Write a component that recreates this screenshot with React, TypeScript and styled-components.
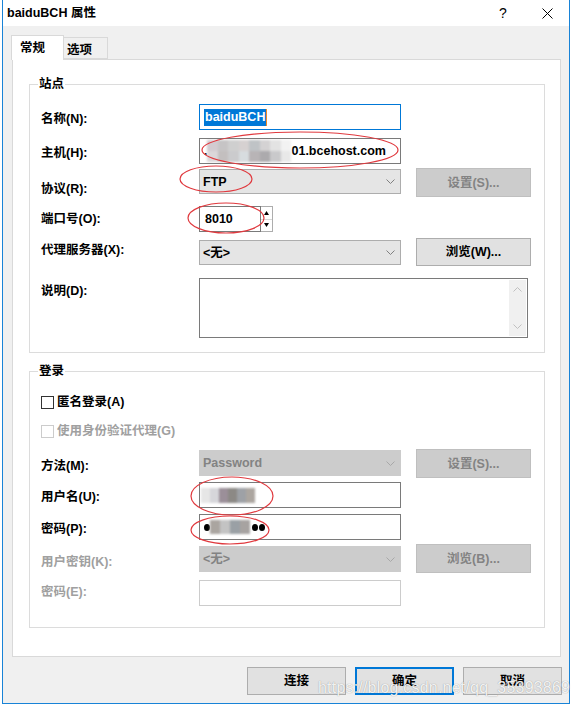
import React from "react";
import styled, { createGlobalStyle } from "styled-components";

const GlobalStyle = createGlobalStyle`
  html, body {
    margin: 0;
    padding: 0;
    background: #ffffff;
  }
  body {
    font-family: "Liberation Sans", "Noto Sans CJK SC", sans-serif;
    font-size: 12.5px;
    font-weight: bold;
    color: #000;
  }
  * {
    box-sizing: border-box;
  }
`;

const Page = styled.div`
  position: relative;
  width: 572px;
  height: 708px;
  padding-left: 2px;
  overflow: hidden;
`;

const Window = styled.div`
  width: 568px;
  height: 704px;
  border: 1px solid #1883d7;
  border-top: none;
  background: #f0f0f0;
  display: flex;
  flex-direction: column;
`;

const TitleBar = styled.div`
  height: 26px;
  background: #ffffff;
  display: flex;
  align-items: center;
  padding-left: 4px;
`;

const Title = styled.div`
  flex: 1;
  line-height: 16px;
`;

const CaptionButton = styled.div`
  width: 44px;
  height: 26px;
  display: flex;
  align-items: center;
  justify-content: center;
  font-weight: normal;
  font-size: 14px;
`;

const Body = styled.div`
  padding: 9px 7px 0 8px;
  flex: 1;
`;

const TabStrip = styled.div`
  display: flex;
  align-items: flex-end;
  height: 24px;
`;

const Tab = styled.div<{ $active?: boolean }>`
  position: relative;
  z-index: 1;
  height: ${(p) => (p.$active ? "25px" : "22px")};
  width: ${(p) => (p.$active ? "53px" : "44px")};
  margin-bottom: ${(p) => (p.$active ? "-1px" : "0")};
  padding-left: ${(p) => (p.$active ? "8px" : "3px")};
  padding-top: ${(p) => (p.$active ? "4px" : "4px")};
  line-height: 16px;
  background: ${(p) => (p.$active ? "#ffffff" : "#f0f0f0")};
  border: 1px solid #d9d9d9;
  border-bottom: ${(p) => (p.$active ? "none" : "1px solid #d9d9d9")};
  border-left: ${(p) => (p.$active ? "1px solid #d9d9d9" : "none")};
`;

const Panel = styled.div`
  margin-left: 1px;
  width: 549px;
  height: 598px;
  background: #ffffff;
  border: 1px solid #d9d9d9;
  padding: 24px 15px 0 16px;
`;

const Group = styled.div<{ $mt?: number; $pb: number }>`
  position: relative;
  border: 1px solid #dcdcdc;
  margin-top: ${(p) => p.$mt ?? 0}px;
  padding: 0 0 ${(p) => p.$pb}px 11px;
`;

const Legend = styled.span`
  position: absolute;
  top: -9px;
  left: 8px;
  background: #ffffff;
  padding: 0 1px;
  line-height: 16px;
`;

const Row = styled.div<{ $h: number; $mt: number }>`
  display: flex;
  align-items: flex-start;
  height: ${(p) => p.$h}px;
  margin-top: ${(p) => p.$mt}px;
`;

const Label = styled.div<{ $pt: number; $disabled?: boolean }>`
  width: 158px;
  flex-shrink: 0;
  padding-top: ${(p) => p.$pt}px;
  line-height: 16px;
  color: ${(p) => (p.$disabled ? "#a0a0a0" : "#000")};
`;

const Input = styled.div<{ $focus?: boolean; $disabled?: boolean; $w?: number }>`
  width: ${(p) => p.$w ?? 202}px;
  height: 26px;
  flex-shrink: 0;
  background: #ffffff;
  border: 1px solid
    ${(p) => (p.$focus ? "#0078d7" : p.$disabled ? "#cccccc" : "#7a7a7a")};
  display: flex;
  align-items: center;
  padding-left: 4px;
  line-height: 16px;
  white-space: nowrap;
  overflow: hidden;
`;

const Selected = styled.span`
  background: #0078d7;
  color: #ffffff;
  padding: 0 1px;
  line-height: 17px;
`;

const Caret = styled.span`
  display: inline-block;
  width: 1px;
  height: 17px;
  background: #f08a24;
`;

const Select = styled.div<{ $mt: number; $h: number; $disabled?: boolean }>`
  width: 202px;
  height: ${(p) => p.$h}px;
  margin-top: ${(p) => p.$mt}px;
  flex-shrink: 0;
  background: ${(p) => (p.$disabled ? "#cccccc" : "#e5e5e5")};
  border: 1px solid ${(p) => (p.$disabled ? "#cccccc" : "#adadad")};
  color: ${(p) => (p.$disabled ? "#838383" : "#000")};
  display: flex;
  align-items: center;
  justify-content: space-between;
  padding: 0 5px 0 3px;
  line-height: 16px;
`;

const SideButton = styled.div<{ $disabled?: boolean }>`
  width: 115px;
  height: 100%;
  margin-left: 15px;
  flex-shrink: 0;
  background: ${(p) => (p.$disabled ? "#cccccc" : "#e1e1e1")};
  border: 1px solid ${(p) => (p.$disabled ? "#bfbfbf" : "#adadad")};
  color: ${(p) => (p.$disabled ? "#838383" : "#000")};
  display: flex;
  align-items: center;
  justify-content: center;
  line-height: 16px;
`;

const Spinner = styled.div`
  width: 12px;
  height: 26px;
  border: 1px solid #adadad;
  border-left: none;
  display: flex;
  flex-direction: column;
`;

const SpinHalf = styled.div<{ $top?: boolean }>`
  flex: 1;
  display: flex;
  align-items: center;
  justify-content: center;
  border-bottom: ${(p) => (p.$top ? "1px solid #d8d8d8" : "none")};
`;

const DescBox = styled.div`
  width: 329px;
  height: 60px;
  border: 1px solid #7a7a7a;
  display: flex;
  justify-content: flex-end;
  padding: 1px;
`;

const ScrollBar = styled.div`
  width: 17px;
  height: 100%;
  background: #f0f0f0;
  display: flex;
  flex-direction: column;
  justify-content: space-between;
  align-items: center;
  padding: 7px 0 7px;
`;

const CheckBox = styled.span<{ $disabled?: boolean }>`
  display: inline-block;
  width: 13px;
  height: 13px;
  margin-top: 2px;
  background: #ffffff;
  border: 1px solid ${(p) => (p.$disabled ? "#cccccc" : "#333333")};
`;

const CheckText = styled.span<{ $disabled?: boolean }>`
  margin-left: 3px;
  line-height: 16px;
  color: ${(p) => (p.$disabled ? "#a0a0a0" : "#000")};
`;

const Mosaic = styled.span<{ $cols: number; $cw: number; $ch: number }>`
  display: inline-grid;
  grid-template-columns: repeat(${(p) => p.$cols}, ${(p) => p.$cw}px);
  grid-auto-rows: ${(p) => p.$ch}px;
  filter: blur(0.9px);
  flex-shrink: 0;
`;

const Cell = styled.span`
  display: block;
`;

const Dot = styled.span`
  display: inline-block;
  width: 6px;
  height: 7px;
  border-radius: 50%;
  background: #000;
  flex-shrink: 0;
`;

const Footer = styled.div`
  display: flex;
  justify-content: flex-end;
  gap: 9px;
  margin-top: 10px;
`;

const DialogButton = styled.div<{ $primary?: boolean }>`
  width: 99px;
  height: 28px;
  background: #e1e1e1;
  border: ${(p) => (p.$primary ? "2px solid #0078d7" : "1px solid #adadad")};
  display: flex;
  align-items: center;
  justify-content: center;
  line-height: 16px;
`;

const Overlay = styled.svg`
  position: absolute;
  top: 0;
  left: 0;
  pointer-events: none;
`;

const Watermark = styled.div`
  position: absolute;
  left: 318px;
  top: 679px;
  font-family: "Liberation Sans", sans-serif;
  font-weight: normal;
  font-size: 16px;
  letter-spacing: 0.2px;
  color: rgba(255, 255, 255, 0.9);
  text-shadow: 0 0 1px rgba(60, 60, 60, 0.55);
  pointer-events: none;
`;

const Chevron = ({ disabled }: { disabled?: boolean }) => (
  <svg width="9" height="5" viewBox="0 0 9 5">
    <polyline
      points="0.5,0.5 4.5,4.5 8.5,0.5"
      fill="none"
      stroke={disabled ? "#a8a8a8" : "#808080"}
      strokeWidth="1"
    />
  </svg>
);

const ScrollArrow = ({ up }: { up?: boolean }) => (
  <svg width="9" height="5" viewBox="0 0 9 5">
    <polyline
      points={up ? "0.5,4.5 4.5,0.5 8.5,4.5" : "0.5,0.5 4.5,4.5 8.5,0.5"}
      fill="none"
      stroke="#c0c0c0"
      strokeWidth="1"
    />
  </svg>
);

const SpinArrow = ({ up }: { up?: boolean }) => (
  <svg width="5" height="4" viewBox="0 0 5 4">
    <polygon points={up ? "2.5,0 5,4 0,4" : "0,0 5,0 2.5,4"} fill="#000" />
  </svg>
);

const renderMosaic = (rows: string[][], cw: number, ch: number) => (
  <Mosaic $cols={rows[0].length} $cw={cw} $ch={ch}>
    {rows.flat().map((c, i) => (
      <Cell key={i} style={{ background: c }} />
    ))}
  </Mosaic>
);

const hostMosaic = [
  ["#d2cbd0", "#c6c4c5", "#cfcfcf", "#d6d1d1", "#bfc3c6", "#d4d2d3", "#e3e3e3", "#f2f2f2"],
  ["#dbd7d9", "#c3bfbf", "#cbcbcd", "#d7dcdf", "#b8b4b6", "#acaaad", "#c9c9cb", "#e8e8e8"],
];
const userMosaic = [["#e6e6e6", "#d6d6da", "#9b8f99", "#8c8985", "#9ea1a6", "#aca6a0"]];
const passMosaic = [["#aaa5a0", "#c3c3c3", "#9aa0a5", "#a7a3a1"]];

export default function App() {
  return (
    <Page>
      <GlobalStyle />
      <Window>
        <TitleBar>
          <Title>baiduBCH 属性</Title>
          <CaptionButton>?</CaptionButton>
          <CaptionButton>
            <svg width="11" height="11" viewBox="0 0 11 11">
              <path d="M0.5 0.5 L10.5 10.5 M10.5 0.5 L0.5 10.5" stroke="#000" strokeWidth="1" />
            </svg>
          </CaptionButton>
        </TitleBar>
        <Body>
          <TabStrip>
            <Tab $active>常规</Tab>
            <Tab>选项</Tab>
          </TabStrip>
          <Panel>
            <Group $pb={14}>
              <Legend>站点</Legend>
              <Row $h={26} $mt={19}>
                <Label $pt={7}>名称(N):</Label>
                <Input $focus>
                  <Selected>baiduBCH</Selected>
                  <Caret />
                </Input>
              </Row>
              <Row $h={26} $mt={8}>
                <Label $pt={7}>主机(H):</Label>
                <Input>
                  <span>.</span>
                  {renderMosaic(hostMosaic, 10.5, 11)}
                  <span>01.bcehost.com</span>
                </Input>
              </Row>
              <Row $h={29} $mt={4}>
                <Label $pt={13}>协议(R):</Label>
                <Select $mt={1} $h={25}>
                  <span>FTP</span>
                  <Chevron />
                </Select>
                <SideButton $disabled>设置(S)...</SideButton>
              </Row>
              <Row $h={26} $mt={9}>
                <Label $pt={5}>端口号(O):</Label>
                <Input $w={62} style={{ paddingLeft: 5 }}>8010</Input>
                <Spinner>
                  <SpinHalf $top>
                    <SpinArrow up />
                  </SpinHalf>
                  <SpinHalf>
                    <SpinArrow />
                  </SpinHalf>
                </Spinner>
              </Row>
              <Row $h={28} $mt={6}>
                <Label $pt={4}>代理服务器(X):</Label>
                <Select $mt={2} $h={25}>
                  <span>&lt;无&gt;</span>
                  <Chevron />
                </Select>
                <SideButton>浏览(W)...</SideButton>
              </Row>
              <Row $h={60} $mt={12}>
                <Label $pt={5}>说明(D):</Label>
                <DescBox>
                  <ScrollBar>
                    <ScrollArrow up />
                    <ScrollArrow />
                  </ScrollBar>
                </DescBox>
              </Row>
            </Group>

            <Group $mt={18} $pb={21}>
              <Legend>登录</Legend>
              <Row $h={16} $mt={22}>
                <CheckBox />
                <CheckText>匿名登录(A)</CheckText>
              </Row>
              <Row $h={16} $mt={13}>
                <CheckBox $disabled />
                <CheckText $disabled>使用身份验证代理(G)</CheckText>
              </Row>
              <Row $h={29} $mt={10}>
                <Label $pt={9}>方法(M):</Label>
                <Select $mt={1} $h={26} $disabled>
                  <span>Password</span>
                  <Chevron disabled />
                </Select>
                <SideButton $disabled>设置(S)...</SideButton>
              </Row>
              <Row $h={26} $mt={4}>
                <Label $pt={7}>用户名(U):</Label>
                <Input style={{ paddingLeft: 1 }}>{renderMosaic(userMosaic, 9, 15)}</Input>
              </Row>
              <Row $h={26} $mt={6}>
                <Label $pt={7}>密码(P):</Label>
                <Input>
                  <Dot />
                  {renderMosaic(passMosaic, 10, 14)}
                  <Dot style={{ marginLeft: 2 }} />
                  <Dot style={{ marginLeft: 1 }} />
                </Input>
              </Row>
              <Row $h={29} $mt={4}>
                <Label $pt={10} $disabled>
                  用户密钥(K):
                </Label>
                <Select $mt={2} $h={26} $disabled>
                  <span>&lt;无&gt;</span>
                  <Chevron disabled />
                </Select>
                <SideButton $disabled>浏览(B)...</SideButton>
              </Row>
              <Row $h={26} $mt={7}>
                <Label $pt={4} $disabled>
                  密码(E):
                </Label>
                <Input $disabled />
              </Row>
            </Group>
          </Panel>
          <Footer>
            <DialogButton>连接</DialogButton>
            <DialogButton $primary>确定</DialogButton>
            <DialogButton>取消</DialogButton>
          </Footer>
        </Body>
      </Window>

      <Overlay width="572" height="708" viewBox="0 0 572 708">
        <g fill="none" stroke="#e0393e" strokeWidth="1.2">
          <ellipse cx="300" cy="150" rx="98" ry="18" />
          <ellipse cx="216" cy="179" rx="36" ry="13" />
          <ellipse cx="226" cy="218" rx="38" ry="15" />
          <ellipse cx="232" cy="496" rx="41" ry="19" />
          <ellipse cx="230" cy="530" rx="39" ry="14" />
        </g>
      </Overlay>
      <Watermark>https://blog.csdn.net/qq_35393869</Watermark>
    </Page>
  );
}
